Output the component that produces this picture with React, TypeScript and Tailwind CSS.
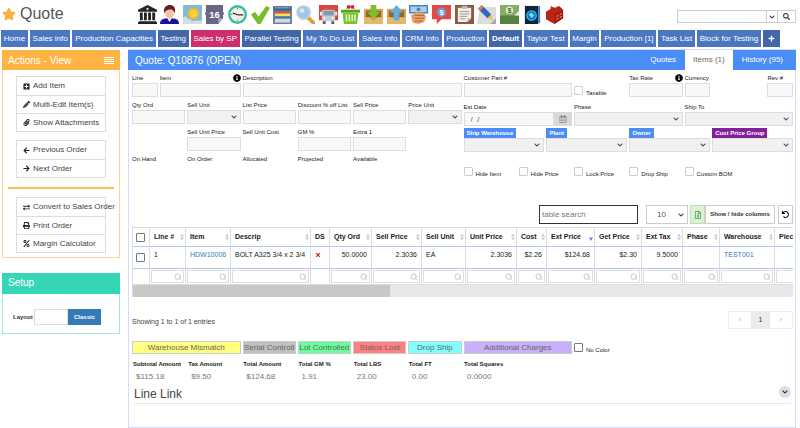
import React from 'react';
import {
  FaArrowLeft, FaArrowRight, FaChevronDown, FaExchangeAlt, FaInfoCircle, FaPaperclip,
  FaPencilAlt, FaPercent, FaPlus, FaPlusSquare, FaPrint, FaRegCalendarAlt, FaRegFileExcel,
  FaSearch, FaStar, FaTimes, FaUndo,
} from 'react-icons/fa';
import { Search } from 'lucide-react';

/* ---------- Toolbar pictures ---------- */

const toolbarIcons: { name: string; art: React.ReactNode }[] = [
  { name: 'Bank', art: (<g fill="#222"><path d="M10 0 20 5v2H0V5z" /><path d="M1 17h18v1h1v2H0v-2h1z" /><path d="M2 8h3v8H2zM6.3 8h3v8h-3zM10.7 8h3v8h-3zM15 8h3v8h-3z" /><circle cx="10" cy="4.2" r="1.2" fill="#ddd" /></g>) },
  { name: 'Customer', art: (<g><path d="M0 20c0-5 4-6 10-6s10 1 10 6z" fill="#15149a" /><path d="M7 13h6l-3 5z" fill="#fff" /><ellipse cx="10" cy="8.5" rx="4.6" ry="6" fill="#f3c1a8" /><path d="M4.5 9C3 2 7 0 10.500 0c4 0 6.500 3 5 9-1-3-2-4-4.500-4.500C8 5.500 6 5 4.500 9z" fill="#6b1d1d" /></g>) },
  { name: 'Weather', art: (<g><path d="M0 0h20v20H0z" fill="#7fb9dc" /><circle cx="11" cy="9" r="6" fill="#f7b916" /><circle cx="11" cy="9" r="4" fill="#fcd048" /><path d="M0 20v-7c3-2 5 0 5 2 3-1 4 0 4 2 3-1 8 0 11-1v4z" fill="#d5dde0" /></g>) },
  { name: 'Calendar', art: (<g><path d="M1 0h18v14l-5 6H1z" fill="#6a6583" /><path d="M19 14h-5v6z" fill="#aaa6bf" /><path d="M0 9h1M19 9h1" stroke="#6a6583" strokeWidth="2" /><text x="10" y="14" textAnchor="middle" fontSize="10" fontWeight="bold" fill="#fff" fontFamily="Liberation Sans, sans-serif">16</text></g>) },
  { name: 'Clock', art: (<g><circle cx="10" cy="10" r="8.700" fill="#f4efe4" stroke="#2fbfa3" strokeWidth="2.400" /><path d="M5 8.500l6 2h5" fill="none" stroke="#333" strokeWidth="1.300" /><path d="M10 3v1.500M10 15.500V17M3 10h1.500" stroke="#777" /></g>) },
  { name: 'Approve', art: (<path d="M0 10l4-3 4 5L16 1l4 2-10 17H7z" fill="#79bd2a" />) },
  { name: 'Schedule', art: (<g><path d="M0 1h20v19H0z" fill="#6d7f9b" /><path d="M1 2h18v4H1z" fill="#41618d" /><path d="M2 3h16" stroke="#c9d6e8" strokeDasharray="2 1" /><path d="M2 7h16v2H2z" fill="#e94b3c" /><path d="M2 9h16v3H2z" fill="#f6df52" /><path d="M2 12h16v1.500H2z" fill="#3678c6" /><path d="M2 14.500h16v4H2z" fill="#d5d8dc" /></g>) },
  { name: 'Find', art: (<g><path d="M12.500 13l5.500 5.500" stroke="#d9a13a" strokeWidth="4" strokeLinecap="round" /><circle cx="8" cy="8" r="6.800" fill="#9dc4ef" stroke="#c4ccd8" strokeWidth="2" /><circle cx="6.500" cy="6" r="2.500" fill="#d6e8fb" /></g>) },
  { name: 'Shipping', art: (<g><path d="M0 0h20v16H0z" fill="#d9463f" /><rect x="3" y="5" width="14" height="12" rx="2" fill="#c5cbd1" /><path d="M4.500 6h11v5h-11z" fill="#8399ab" /><path d="M1 7h2v4H1zM17 7h2v4h-2z" fill="#eee" /><path d="M4 17h3v3H4zM13 17h3v3h-3z" fill="#545a60" /><path d="M4.500 13h2v1.500h-2zM13.500 13h2v1.500h-2z" fill="#fff" /></g>) },
  { name: 'Basket', art: (<g><path d="M5 6C5 1 15 1 15 6" fill="none" stroke="#aaa" /><circle cx="8" cy="2" r="2" fill="#cf2437" /><circle cx="12" cy="2" r="2" fill="#cf2437" /><path d="M0 5h20v3H0z" fill="#55a51c" /><path d="M1.500 8h17L17 20H3z" fill="#7ac52e" /><path d="M5 10h1.500v7H5zM8 10h1.500v7H8zM11 10h1.500v7H11zM14 10h1.500v7H14z" fill="#e8f7d8" /></g>) },
  { name: 'Receive', art: (<g><path d="M0 4h20v16H0z" fill="#d6a758" /><path d="M2 6h16v7H2z" fill="#8d6630" /><path d="M0 13h6l2 3h4l2-3h6v7H0z" fill="#e3b96c" /><path d="M7 0h6v7h4l-7 8-7-8h4z" fill="#7fbd31" /></g>) },
  { name: 'Send', art: (<g><path d="M0 4h20v16H0z" fill="#d6a758" /><path d="M2 6h16v7H2z" fill="#8d6630" /><path d="M0 13h6l2 3h4l2-3h6v7H0z" fill="#e3b96c" /><path d="M7 16h6V8h4l-7-8-7 8h4z" fill="#66aedd" /></g>) },
  { name: 'Payment', art: (<g><path d="M0 0h20v9H0z" fill="#4583c4" /><path d="M1.500 1.500h17v6h-17z" fill="#a8d0ee" /><circle cx="10" cy="4.500" r="2" fill="#4583c4" /><path d="M2 11l5-3h8l3 4-2 6-6 2-6-1z" fill="#e7a26b" /><path d="M6 11h10M6 14h10M6 17h8" stroke="#a8652f" /></g>) },
  { name: 'Price note', art: (<g><path d="M0 0h20v15H10l-5 5v-5H0z" fill="#dd4b42" /><circle cx="10" cy="7.500" r="5" fill="#7194d8" /><text x="10" y="10.500" textAnchor="middle" fontSize="8" fontWeight="bold" fill="#fff" fontFamily="Liberation Sans, sans-serif">$</text></g>) },
  { name: 'Clipboard', art: (<g><path d="M0 0h20v20H0z" fill="#935544" /><path d="M3 3h14v11l-4 4H3z" fill="#f2efe8" /><path d="M17 14h-4v4z" fill="#c7c1b5" /><path d="M7 1h6v3H7z" fill="#b9b9b9" /><path d="M5 7h10M5 9.500h10M5 12h8M5 14.500h6" stroke="#a09a90" /></g>) },
  { name: 'Edit', art: (<g><path d="M3 2h17v18H0z" fill="#dcdcd8" /><path d="M20 14v6h-6z" fill="#aaa" /><path d="M1 4l4-4 10 10-4 4z" fill="#3367c4" /><path d="M11 14l4-4 2 6z" fill="#edc25a" /><path d="M1 4l4-4 2 2-4 4z" fill="#e08a3a" /></g>) },
  { name: 'Cash', art: (<g><path d="M0 0h20v20H0z" fill="#57823f" /><path d="M0 0h20v11H0z" fill="#86ad69" /><circle cx="10" cy="5.500" r="4" fill="#dce8cc" /><text x="10" y="8" textAnchor="middle" fontSize="7" fontWeight="bold" fill="#44682f" fontFamily="Liberation Sans, sans-serif">$</text><path d="M20 6v5h-5z" fill="#e8eedf" /></g>) },
  { name: 'Directory', art: (<g><path d="M2 1h14v19H2z" fill="#10233d" /><circle cx="9" cy="11" r="5" fill="#176fc0" stroke="#43c6f4" strokeWidth="1.200" /><path d="M6 10l3-2 3 3-3 3z" fill="#67e0ff" /><path d="M16 1h2v18h-2z" fill="#2a80d0" /></g>) },
  { name: 'Warehouse', art: (<g><path d="M1 7l5-3V1l4 2 5-2 4 4v9l-9 6-9-5z" fill="#bb2414" /><path d="M10 9l9-4v9l-9 6z" fill="#a51c0e" /><path d="M12 12l2-1M15.500 10l2-1M12 15l2-1M15.500 13l2-1" stroke="#eeb0a6" /></g>) },
];

/* ---------- Small building blocks ---------- */

const slug = (s: string) => s.toLowerCase().replace(/[^a-z0-9]+/g, '-');
const labelText = 'block h-[10px] text-[6px] leading-[10px] whitespace-nowrap text-[#222]';
const box = 'h-[14px] w-full min-w-0 rounded-none border border-[#ddd] bg-[#f8f8f8] text-[8px] leading-none outline-none';

function Field({ label, span, kind = 'input', info, tag }: {
  label: string; span: string; kind?: 'input' | 'select' | 'none' | 'date'; info?: boolean; tag?: string;
}) {
  const id = 'field-' + slug(label);
  return (
    <div className={span}>
      <div className="flex items-center justify-between">
        {kind === 'none'
          ? <span className={labelText}>{label}</span>
          : <label htmlFor={id} className={tag ? 'block h-[10px] px-[3px] text-[6px] leading-[10px] font-bold whitespace-nowrap text-white ' + tag : labelText}>{label}</label>}
        {info && <FaInfoCircle className="size-2 shrink-0 text-black" />}
      </div>
      {kind === 'input' && <input id={id} className={box + ' px-1'} />}
      {kind === 'date' && (
        <div className="flex">
          <input id={id} defaultValue="/  /" className={box + ' px-[6px] text-[#555]'} />
          <button aria-label="Pick date" className="flex h-[14px] w-[18px] shrink-0 items-center justify-center bg-[#d9d9d9] text-[#888]">
            <FaRegCalendarAlt className="size-2" />
          </button>
        </div>
      )}
      {kind === 'select' && (
        <div className="grid items-center">
          <select id={id} className={'col-start-1 row-start-1 h-[14px] w-full min-w-0 appearance-none border border-[#ddd] bg-[#f1f1f1] px-1 text-[8px]'}><option></option></select>
          <FaChevronDown className="pointer-events-none col-start-1 row-start-1 mr-1 size-[6px] justify-self-end text-[#444]" />
        </div>
      )}
    </div>
  );
}

function Tick({ label, span, dark }: { label: string; span: string; dark?: boolean }) {
  return (
    <label className={'flex items-start gap-[3px] ' + span}>
      <input type="checkbox" className={'size-[9px] shrink-0 appearance-none rounded-[1px] border bg-white ' + (dark ? 'border-[#777]' : 'border-[#ccc]')} />
      <span className="pt-[2px] text-[6px] leading-[10px] whitespace-nowrap text-[#222]">{label}</span>
    </label>
  );
}

function MenuGroup({ items }: { items: [React.ElementType, string][] }) {
  return (
    <div className="mx-[13px] border border-[#ddd]">
      {items.map(([Icon, text], i) => (
        <button key={text} className={'flex h-[18px] w-full items-center gap-[3px] pl-[6px] text-[8px] whitespace-nowrap text-[#444] ' + (i ? 'border-t border-[#ddd]' : '')}>
          <Icon className="size-[7px] shrink-0 text-[#222]" />{text}
        </button>
      ))}
    </div>
  );
}

/* ---------- Data ---------- */

const navTabs = ['Home', 'Sales info', 'Production Capacities', 'Testing', 'Sales by SP', 'Parallel Testing', 'My To Do List', 'Sales Info', 'CRM Info', 'Production', 'Default', 'Taylor Test', 'Margin', 'Production [1]', 'Task List', 'Block for Testing'];
const tabColour: Record<string, string> = {
  'Sales by SP': 'bg-[#cc2f6e]',
  Testing: 'bg-[#4267a8]',
  'Parallel Testing': 'bg-[#4267a8]',
  Default: 'bg-[#4267a8] font-bold',
};

type Column = { head: string; width: string; value: string; right?: boolean; link?: boolean };
const columns: Column[] = [
  { head: 'Line #', width: 'w-[36px]', value: '1' },
  { head: 'Item', width: 'w-[45px]', value: 'HDW10006', link: true },
  { head: 'Descrip', width: 'w-[80px]', value: 'BOLT A325 3/4 x 2 3/4' },
  { head: 'DS', width: 'w-[19px]', value: '' },
  { head: 'Qty Ord', width: 'w-[42px]', value: '50.0000', right: true },
  { head: 'Sell Price', width: 'w-[50px]', value: '2.3036', right: true },
  { head: 'Sell Unit', width: 'w-[44px]', value: 'EA' },
  { head: 'Unit Price', width: 'w-[51px]', value: '2.3036', right: true },
  { head: 'Cost', width: 'w-[30px]', value: '$2.26', right: true },
  { head: 'Ext Price', width: 'w-[48px]', value: '$124.68', right: true },
  { head: 'Get Price', width: 'w-[47px]', value: '$2.30', right: true },
  { head: 'Ext Tax', width: 'w-[41px]', value: '9.5000', right: true },
  { head: 'Phase', width: 'w-[37px]', value: '' },
  { head: 'Warehouse', width: 'w-[55px]', value: 'TEST001', link: true },
  { head: 'Pieces', width: 'w-[44px]', value: '' },
];

const legend: [string, string][] = [
  ['Warehouse Mismatch', 'col-span-4 bg-[#ffff80]'],
  ['Serial Controll', 'col-span-2 bg-[#c0c0c0]'],
  ['Lot Controlled', 'col-span-2 bg-[#66ff99]'],
  ['Status Lost', 'col-span-2 bg-[#ff8080]'],
  ['Drop Ship', 'col-span-2 bg-[#80ffff]'],
  ['Additional Charges', 'col-span-4 bg-[#c8b0fa]'],
];

const totals: [string, string][] = [
  ['Subtotal Amount', '$115.18'], ['Tax Amount', '$9.50'], ['Total Amount', '$124.68'], ['Total GM %', '1.91'],
  ['Total LBS', '23.00'], ['Total FT', '0.00'], ['Total Squares', '0.0000'],
];

function SortMark({ active }: { active?: boolean }) {
  return (
    <svg viewBox="0 0 4 8" className="h-2 w-1 shrink-0">
      {active ? <path d="M0 4.500h4L2 8z" fill="#7b7bf0" /> : <path d="M0 3.500h4L2 .5zM0 4.500h4l-2 3z" fill="#ccc" />}
    </svg>
  );
}

function ItemsTable() {
  const edge = 'border-r border-[#ddd]';
  return (
    <div className="overflow-hidden border-l border-[#ddd]">
      <table className="w-[686px] table-fixed border-separate border-spacing-0 text-[7px] text-[#222]">
        <thead>
          <tr className="h-5">
            <th className="w-[17px] border-y border-r border-t-[#ddd] border-r-[#ddd] border-b-[#b4c8ee] p-0 pl-[3px]">
              <input type="checkbox" aria-label="Select all lines" className="block size-[9px] appearance-none rounded-[1px] border border-[#777]" />
            </th>
            {columns.map((c) => (
              <th key={c.head} className={c.width + ' border-y border-r border-t-[#ddd] border-r-[#ddd] border-b-[#b4c8ee] p-0 pr-[1px] pl-[4px] text-left'}>
                <div className="flex items-center justify-between leading-[10px] whitespace-nowrap">
                  {c.head}{c.head !== 'DS' && <SortMark active={c.head === 'Ext Price'} />}
                </div>
              </th>
            ))}
          </tr>
        </thead>
        <tbody>
          <tr className="h-[22px]">
            <td className="border-r border-b border-r-[#ddd] border-b-[#b4c8ee] p-0 pl-[3px]">
              <input type="checkbox" aria-label="Select line 1" className="block size-[9px] appearance-none rounded-[1px] border border-[#777]" />
            </td>
            {columns.map((c) => (
              <td key={c.head} className={'border-r border-b border-r-[#ddd] border-b-[#b4c8ee] p-0 pt-[3px] align-top leading-[10px] whitespace-nowrap ' + (c.right ? 'pr-[4px] text-right' : 'pl-[4px]')}>
                {c.link ? <a href="#" className="text-[#337ab7]">{c.value}</a> : c.value}
                {c.head === 'DS' && <FaTimes className="mt-[2px] size-[6px] text-[#b5252a]" />}
              </td>
            ))}
          </tr>
          <tr className="h-4">
            <td className={'border-b border-[#ddd] p-0 ' + edge} />
            {columns.map((c) => (
              <td key={c.head} className={'border-b border-[#ddd] p-px ' + edge}>
                {c.head !== 'DS' && (
                  <div className="grid items-center">
                    <input aria-label={'Filter ' + c.head} className="col-start-1 row-start-1 h-[13px] w-full min-w-0 border border-[#ddd] bg-white text-[7px]" />
                    <Search className="pointer-events-none col-start-1 row-start-1 mr-[2px] size-2 justify-self-end text-[#aaa]" />
                  </div>
                )}
              </td>
            ))}
          </tr>
        </tbody>
      </table>
      <div className="h-3 bg-[#e8e8e8]"><div className="h-full w-[39%] bg-[#c8c8c8]" /></div>
    </div>
  );
}

export default function App() {
  return (
    <div className="bg-white font-['Liberation_Sans',Arial,sans-serif] text-[8px] text-[#333]">
      <header className="flex h-[30px] items-center pr-1 pb-[2px] pl-[2px]">
        <h1 className="flex w-[135px] shrink-0 items-center gap-1 text-[16px] leading-5 text-[#555]">
          <FaStar className="size-[14px] text-[#ffad3b]" />Quote
        </h1>
        <nav aria-label="Shortcuts" className="flex w-[428px] justify-between">
          {toolbarIcons.map((icon) => (
            <button key={icon.name} aria-label={icon.name} className="flex w-5 justify-center">
              <svg viewBox="0 0 20 20" className="size-[19px]">{icon.art}</svg>
            </button>
          ))}
        </nav>
        <form className="mt-[5px] ml-auto flex h-[13px] border border-[#ccc]">
          <input aria-label="Search" className="w-[88px] px-1 text-[8px] outline-none" />
          <button type="button" aria-label="Search options" className="flex w-[11px] items-center justify-center border-l border-[#ccc]"><FaChevronDown className="size-[6px]" /></button>
          <button type="button" aria-label="Run search" className="flex w-[18px] items-center justify-center border-l border-[#ccc]"><FaSearch className="size-[7px]" /></button>
        </form>
      </header>

      <nav aria-label="Dashboards" className="flex gap-[2px] pr-5 pl-px text-center text-[8px] leading-[17px] whitespace-nowrap text-white">
        {navTabs.map((t) => (
          <a key={t} href="#" className={'flex-auto px-[2px] ' + (tabColour[t] ?? 'bg-[#4a76c2]')}>{t}</a>
        ))}
        <button aria-label="Add tab" className="flex w-[17px] shrink-0 items-center justify-center bg-[#4267a8]"><FaPlus className="size-[7px]" /></button>
      </nav>

      <div className="flex items-start gap-2 pt-[2px] pr-1 pl-[2px]">
        <aside className="w-[118px] shrink-0 pt-px">
          <section className="border border-[#ffd699] pb-1">
            <div className="-mx-px -mt-px flex h-5 items-center justify-between bg-[#ffb343] px-[6px] text-white">
              <h2 className="text-[10px]">Actions - View</h2>
              <button aria-label="Menu" className="flex w-[10px] flex-col gap-px">
                <span className="h-px bg-white" /><span className="h-px bg-white" /><span className="h-px bg-white" /><span className="h-px bg-white" />
              </button>
            </div>
            <div className="pt-[6px]">
              <MenuGroup items={[[FaPlusSquare, 'Add Item'], [FaPencilAlt, 'Multi-Edit Item(s)'], [FaPaperclip, 'Show Attachments']]} />
            </div>
            <div className="pt-2">
              <MenuGroup items={[[FaArrowLeft, 'Previous Order'], [FaArrowRight, 'Next Order']]} />
            </div>
            <hr className="mx-[5px] mt-[9px] mb-2 border-t-2 border-[#ffbf55]" />
            <MenuGroup items={[[FaExchangeAlt, 'Convert to Sales Order'], [FaPrint, 'Print Order'], [FaPercent, 'Margin Calculator']]} />
          </section>
          <section className="mt-[15px] border border-[#9aebda]">
            <h2 className="-mx-px -mt-px h-[21px] bg-[#35d6b5] px-[6px] text-[10px] leading-5 text-white">Setup</h2>
            <div className="flex items-center pt-[15px] pb-2 pl-[10px]">
              <label htmlFor="layout" className="w-[21px] text-[6px] font-bold">Layout</label>
              <input id="layout" className="h-4 w-[34px] border border-[#ddd] text-[7px]" />
              <button className="h-4 w-[33px] bg-[#337ab7] text-[6px] font-bold text-white">Classic</button>
            </div>
          </section>
        </aside>

        <main className="min-w-0 flex-1 border border-[#cfdefa] pb-[23px]">
          <div className="-mx-px flex h-5 items-center justify-between bg-[#4a8df8] pr-1 pl-[7px] text-white">
            <h2 className="text-[10px]">Quote: Q10876 (OPEN)</h2>
            <nav className="flex self-stretch text-[8px] leading-5">
              <a href="#" className="px-[9px]">Quotes</a>
              <a href="#" className="bg-white px-2 text-[#666]">Items (1)</a>
              <a href="#" className="px-[9px]">History (95)</a>
            </nav>
          </div>

          <div className="pt-[3px] pr-[2px] pl-[3px]">
            <div className="flex items-start gap-[2px]">
              <div className="grid min-w-0 flex-1 grid-cols-12 gap-x-[2px] gap-y-[3px]">
                <Field label="Line" span="col-span-1" />
                <Field label="Item" span="col-span-3" info />
                <Field label="Description" span="col-span-8" />
                <Field label="Qty Ord" span="col-span-2" />
                <Field label="Sell Unit" span="col-span-2" kind="select" />
                <Field label="List Price" span="col-span-2" />
                <Field label="Discount % off List" span="col-span-2" />
                <Field label="Sell Price" span="col-span-2" />
                <Field label="Price Unit" span="col-span-2" kind="select" />
                <Field label="Sell Unit Price" span="col-start-3 col-span-2" />
                <Field label="Sell Unit Cost" span="col-span-2" kind="none" />
                <Field label="GM %" span="col-span-2" />
                <Field label="Extra 1" span="col-span-2" />
                <Field label="On Hand" span="col-start-1 col-span-2" kind="none" />
                <Field label="On Order" span="col-span-2" kind="none" />
                <Field label="Allocated" span="col-span-2" kind="none" />
                <Field label="Projected" span="col-span-2" kind="none" />
                <Field label="Available" span="col-span-2" kind="none" />
              </div>
              <div className="min-w-0 flex-1">
                <div className="grid grid-cols-12 gap-x-[2px] gap-y-1">
                  <Field label="Customer Part #" span="col-span-4" />
                  <Tick label="Taxable" span="col-span-2 pt-[13px]" />
                  <Field label="Tax Rate" span="col-span-2" info />
                  <Field label="Currency" span="col-span-1" />
                  <Field label="Rev #" span="col-start-12 col-span-1" />
                  <Field label="Est Date" span="col-span-4" kind="date" />
                  <Field label="Phase" span="col-span-4" kind="select" />
                  <Field label="Ship To" span="col-span-4" kind="select" />
                </div>
                <div className="grid grid-cols-4 gap-x-[2px] pt-[2px]">
                  <Field label="Ship Warehouse" span="" kind="select" tag="bg-[#4a8df8]" />
                  <Field label="Plant" span="" kind="select" tag="bg-[#4a8df8]" />
                  <Field label="Owner" span="" kind="select" tag="bg-[#4a8df8]" />
                  <Field label="Cust Price Group" span="" kind="select" tag="bg-[#84209b]" />
                </div>
                <div className="grid grid-cols-6 gap-x-[2px] pt-[15px]">
                  <Tick label="Hide Item" span="" />
                  <Tick label="Hide Price" span="" />
                  <Tick label="Lock Price" span="" />
                  <Tick label="Drop Ship" span="" />
                  <Tick label="Custom BOM" span="" />
                </div>
              </div>
            </div>

            <div className="flex justify-end pt-[26px] pb-[3px]">
              <input aria-label="table search" placeholder="table search" className="mr-2 h-[19px] w-[99px] border border-[#333] px-[2px] text-[8px] placeholder:text-[#777]" />
              <div className="mr-[2px] grid w-[42px] items-center">
                <select aria-label="Rows per page" className="col-start-1 row-start-1 h-[19px] w-full appearance-none border border-[#ccc] pl-[10px] text-[8px] text-[#555]"><option>10</option></select>
                <FaChevronDown className="pointer-events-none col-start-1 row-start-1 mr-1 size-[6px] justify-self-end" />
              </div>
              <button aria-label="Export to Excel" className="flex h-[19px] w-[15px] items-center justify-center border border-[#c3ddb8] bg-[#dcf0d4] text-[#4c9a50]"><FaRegFileExcel className="size-2" /></button>
              <button className="mr-[3px] h-[19px] w-[70px] border border-[#ccc] text-[6px] font-bold">Show / hide columns</button>
              <button aria-label="Reset table" className="flex h-[19px] w-[15px] items-center justify-center border border-[#ccc] text-black"><FaUndo className="size-[7px]" /></button>
            </div>

            <ItemsTable />

            <div className="flex items-center justify-between pt-[14px] pb-3">
              <p className="pt-1 text-[7px] text-[#444]">Showing 1 to 1 of 1 entries</p>
              <nav aria-label="Pages" className="flex border border-[#eee] text-[7px] leading-4 text-[#aaa]">
                <button aria-label="Previous page" className="w-[22px]">‹</button>
                <button className="w-[19px] bg-[#ebebeb] text-[#333]">1</button>
                <button aria-label="Next page" className="w-[22px]">›</button>
              </nav>
            </div>

            <div className="grid grid-cols-24 gap-x-[2px]">
              {legend.map(([text, style]) => (
                <div key={text} className={'h-[13px] overflow-hidden border border-[#ccc] text-center text-[8px] leading-[12px] whitespace-nowrap text-[#666] ' + style}>{text}</div>
              ))}
              <Tick label="No Color" span="col-span-3 pt-[2px]" dark />
            </div>

            <dl className="grid grid-cols-12 gap-x-[2px] pt-[3px] pl-px">
              {totals.map(([name, amount]) => (
                <div key={name}>
                  <dt className="text-[6px] leading-[12px] font-bold whitespace-nowrap text-[#222]">{name}</dt>
                  <dd className="pl-[3px] text-[8px] leading-[13px] text-[#777]">{amount}</dd>
                </div>
              ))}
            </dl>

            <section className="mx-[2px] mt-1 flex h-[17px] items-center justify-between border-b border-[#e5e5e5]">
              <h3 className="pb-[2px] text-[12px] leading-4 text-[#444]">Line Link</h3>
              <button aria-label="Expand Line Link" className="mb-[6px] flex size-3 items-center justify-center rounded-full bg-[#ddd] text-[#222]"><FaChevronDown className="size-[6px]" /></button>
            </section>
          </div>
        </main>
      </div>
    </div>
  );
}
